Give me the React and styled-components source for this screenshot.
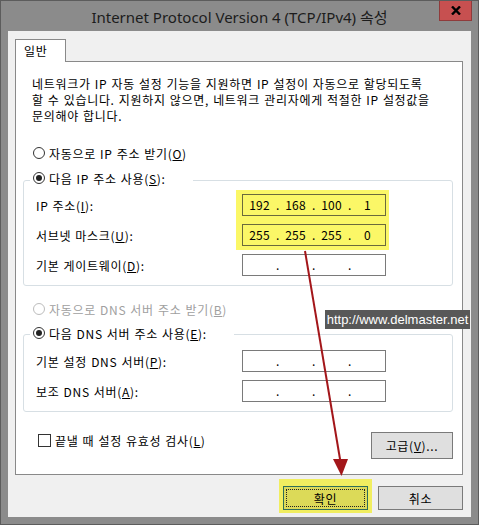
import React from "react"
import styled, { createGlobalStyle } from "styled-components"

const GlobalStyle = createGlobalStyle`
  html, body {
    margin: 0;
    padding: 0;
    background: #fff;
  }
  body {
    font-family: "Noto Sans CJK KR", "Noto Sans", sans-serif;
    font-size: 12px;
    letter-spacing: 0.7px;
    word-spacing: 0.7px;
    color: #000;
  }
`

const Window = styled.div`
  position: relative;
  width: 479px;
  height: 525px;
  box-sizing: border-box;
  border: 1px solid #5c5c5c;
  background: #8b8b8b;
  display: flex;
  flex-direction: column;
  overflow: hidden;
`

const TitleBar = styled.div`
  height: 30px;
  display: grid;
  grid-template-columns: 1fr auto 1fr;
  align-items: center;
`

const Title = styled.div`
  grid-column: 2;
  font-family: "Noto Sans", "Noto Sans CJK KR", sans-serif;
  font-size: 15px;
  letter-spacing: 0;
  word-spacing: 0;
  color: #1c1c1c;
  white-space: nowrap;
`

const CloseButton = styled.div`
  grid-column: 3;
  justify-self: end;
  align-self: start;
  margin: -1px 6px 0 0;
  width: 33px;
  height: 21px;
  box-sizing: border-box;
  background: #c75050;
  border: 1px solid #8f3b3b;
  border-top: none;
  display: flex;
  align-items: center;
  justify-content: center;
`

const Client = styled.div`
  flex: 1;
  margin: 0 7px 7px;
  background: #f0f0f0;
  padding: 8px 8px 7px 7px;
  display: flex;
  flex-direction: column;
`

const TabStrip = styled.div`
  display: flex;
`

const Tab = styled.div`
  position: relative;
  z-index: 1;
  width: 51px;
  height: 23px;
  box-sizing: border-box;
  margin-bottom: -1px;
  padding: 2px 0 0 8px;
  background: #fff;
  border: 1px solid #898989;
  border-bottom: none;
  line-height: 18px;
`

const Panel = styled.div`
  flex: 1;
  background: #fff;
  border: 1px solid #898989;
  padding: 14px 9px 15px 7px;
  display: flex;
  flex-direction: column;
`

const Description = styled.p`
  margin: 0 0 0 9px;
  line-height: 16px;
  white-space: nowrap;
`

const RadioRow = styled.div`
  display: flex;
  align-items: center;
  gap: 4px;
  height: 16px;
  margin: ${p => p.$top || 0}px 0 0 10px;
  color: ${p => (p.$disabled ? "#a0a0a0" : "#000")};
`

const RadioDot = styled.span`
  width: 12px;
  height: 12px;
  box-sizing: border-box;
  border-radius: 50%;
  border: 1px solid ${p => (p.$disabled ? "#bcbcbc" : "#333")};
  background: #fff;
  display: flex;
  align-items: center;
  justify-content: center;
  &::after {
    content: "";
    width: 6px;
    height: 6px;
    border-radius: 50%;
    background: ${p => (p.$checked ? "#222" : "transparent")};
  }
`

const Group = styled.div`
  margin-top: ${p => p.$top}px;
  border: 1px solid #d7dfe4;
  border-radius: 3px;
  padding: 0 66px 9px 12px;
`

const Legend = styled.div`
  display: flex;
  align-items: center;
  gap: 4px;
  width: fit-content;
  height: 16px;
  margin: ${p => -p.$lift}px 0 0 -6px;
  padding: 0 27px 0 3px;
  background: #fff;
`

const Fields = styled.div`
  margin-top: ${p => p.$top}px;
  display: grid;
  grid-template-columns: 1fr 144px;
  grid-auto-rows: 22px;
  row-gap: 8px;
  align-items: center;
`

const FieldLabel = styled.label`
  grid-column: 1;
  grid-row: ${p => p.$row};
  white-space: nowrap;
`

const Marker = styled.div`
  grid-column: 2;
  grid-row: 1 / span 2;
  align-self: stretch;
  margin: -4px -3px -4px -6px;
  background: #fbf767;
`

const IpField = styled.div`
  grid-column: 2;
  grid-row: ${p => p.$row};
  height: 22px;
  box-sizing: border-box;
  border: 1px solid ${p => (p.$marked ? "#6b6a3c" : "#7a7a7a")};
  background: ${p => (p.$marked ? "transparent" : "#fff")};
  display: grid;
  grid-template-columns: 33px 3px 33px 3px 33px 3px 33px;
  align-items: center;
  font-size: 12px;
  letter-spacing: 0.2px;
  line-height: 20px;
`

const Octet = styled.span`
  text-align: center;
`

const Dot = styled.span`
  text-align: center;
  letter-spacing: 0;
`

const CheckRow = styled.div`
  margin: auto 0 0 15px;
  display: flex;
  align-items: flex-start;
`

const CheckBox = styled.span`
  width: 13px;
  height: 13px;
  box-sizing: border-box;
  margin-top: 2px;
  border: 1px solid #333;
  background: #fff;
`

const CheckLabel = styled.span`
  margin: 1px 0 0 4px;
  line-height: 16px;
`

const Button = styled.button`
  width: ${p => p.$w}px;
  height: ${p => p.$h}px;
  box-sizing: border-box;
  padding: 0;
  margin: 0;
  font: inherit;
  letter-spacing: inherit;
  color: #000;
  background: ${p => (p.$default ? "#dcda58" : "#dfdfdf")};
  border: 1px solid ${p => (p.$default ? "#2f6e59" : "#7a7a7a")};
  outline: ${p => (p.$default ? "1px dotted #222" : "none")};
  outline-offset: -4px;
`

const PushRight = styled.div`
  margin-left: auto;
`

const ButtonRow = styled.div`
  margin-top: 11px;
  display: flex;
  justify-content: flex-end;
  gap: 10px;
`

const ButtonMark = styled.div`
  display: flex;
  margin: -7px -4px -3px -4px;
  padding: 7px 4px 3px 4px;
  background: #f1ee60;
`

const Watermark = styled.div`
  position: absolute;
  left: 324px;
  top: 309px;
  width: 145px;
  height: 19px;
  background: #585858;
  color: #fff;
  font-family: "Liberation Sans", Arial, sans-serif;
  font-size: 13px;
  letter-spacing: 0;
  word-spacing: 0;
  line-height: 19px;
  text-align: center;
  white-space: nowrap;
`

const Overlay = styled.svg`
  position: absolute;
  left: -1px;
  top: -1px;
  pointer-events: none;
`

const Radio = ({ checked, disabled, children }) => (
  <>
    <RadioDot $checked={checked} $disabled={disabled} />
    <span>{children}</span>
  </>
)

const IpAddress = ({ row, value, marked }) => {
  const parts = value ? value.split(".") : ["", "", "", ""]
  return (
    <IpField $row={row} $marked={marked}>
      <Octet>{parts[0]}</Octet>
      <Dot>.</Dot>
      <Octet>{parts[1]}</Octet>
      <Dot>.</Dot>
      <Octet>{parts[2]}</Octet>
      <Dot>.</Dot>
      <Octet>{parts[3]}</Octet>
    </IpField>
  )
}

export default function App() {
  return (
    <>
      <GlobalStyle />
      <Window>
        <TitleBar>
          <Title>Internet Protocol Version 4 (TCP/IPv4) 속성</Title>
          <CloseButton>
            <svg width="10" height="9" viewBox="0 0 10 9">
              <path d="M1 0.5 L9 8.5 M9 0.5 L1 8.5" stroke="#000" strokeWidth="2.4" />
            </svg>
          </CloseButton>
        </TitleBar>
        <Client>
          <TabStrip>
            <Tab>일반</Tab>
          </TabStrip>
          <Panel>
            <Description>
              네트워크가 IP 자동 설정 기능을 지원하면 IP 설정이 자동으로 할당되도록
              <br />할 수 있습니다. 지원하지 않으면, 네트워크 관리자에게 적절한 IP 설정값을
              <br />문의해야 합니다.
            </Description>

            <RadioRow $top={21}>
              <Radio>자동으로 IP 주소 받기(<u>O</u>)</Radio>
            </RadioRow>

            <Group $top={19}>
              <Legend $lift={11}>
                <Radio checked>다음 IP 주소 사용(<u>S</u>):</Radio>
              </Legend>
              <Fields $top={8}>
                <Marker />
                <FieldLabel $row={1}>IP 주소(<u>I</u>):</FieldLabel>
                <IpAddress row={1} value="192.168.100.1" marked />
                <FieldLabel $row={2}>서브넷 마스크(<u>U</u>):</FieldLabel>
                <IpAddress row={2} value="255.255.255.0" marked />
                <FieldLabel $row={3}>기본 게이트웨이(<u>D</u>):</FieldLabel>
                <IpAddress row={3} />
              </Fields>
            </Group>

            <RadioRow $top={15} $disabled>
              <Radio disabled>자동으로 DNS 서버 주소 받기(<u>B</u>)</Radio>
            </RadioRow>

            <Group $top={17}>
              <Legend $lift={10}>
                <Radio checked>다음 DNS 서버 주소 사용(<u>E</u>):</Radio>
              </Legend>
              <Fields $top={9}>
                <FieldLabel $row={1}>기본 설정 DNS 서버(<u>P</u>):</FieldLabel>
                <IpAddress row={1} />
                <FieldLabel $row={2}>보조 DNS 서버(<u>A</u>):</FieldLabel>
                <IpAddress row={2} />
              </Fields>
            </Group>

            <CheckRow>
              <CheckBox />
              <CheckLabel>끝낼 때 설정 유효성 검사(<u>L</u>)</CheckLabel>
              <PushRight>
                <Button $w={82} $h={27}>고급(<u>V</u>)...</Button>
              </PushRight>
            </CheckRow>
          </Panel>
          <ButtonRow>
            <ButtonMark>
              <Button $w={85} $h={24} $default>확인</Button>
            </ButtonMark>
            <Button $w={85} $h={24}>취소</Button>
          </ButtonRow>
        </Client>

        <Watermark>http://www.delmaster.net</Watermark>
        <Overlay width="479" height="525" viewBox="0 0 479 525">
          <line x1="305" y1="251" x2="340.5" y2="462" stroke="#a3161a" strokeWidth="2" />
          <polygon points="333,459 348,459 341.5,476" fill="#a3161a" />
        </Overlay>
      </Window>
    </>
  )
}
